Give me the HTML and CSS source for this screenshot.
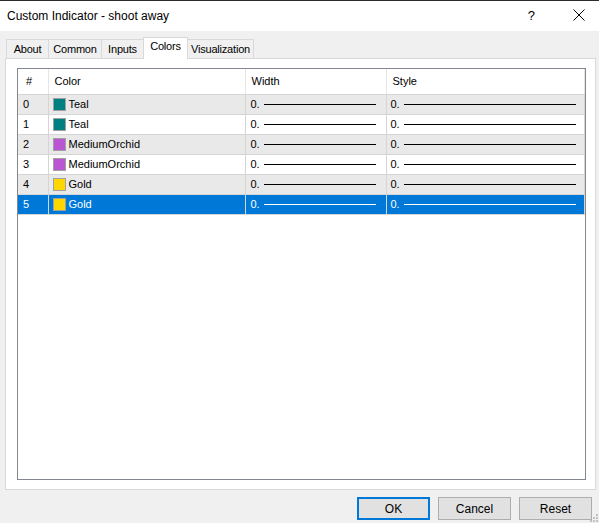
FILE: index.html
```html
<!DOCTYPE html>
<html>
  <head>
    <meta name="viewport" content="width=device-width, initial-scale=1" />
    <title>Custom Indicator - shoot away</title>
    <link rel="stylesheet" href="styles.css">
  </head>

  <body>
    <div id="titlebar">
      <span class="title">Custom Indicator - shoot away</span>
      <span class="help">?</span>
      <svg class="close" width="12" height="12" viewBox="0 0 12 12">
        <path d="M0.5 0.5 L11.5 11.5 M11.5 0.5 L0.5 11.5" stroke="#000" stroke-width="1" fill="none" />
      </svg>
    </div>

    <div id="tabs">
      <div class="tab tab-about">About</div>
      <div class="tab tab-common">Common</div>
      <div class="tab tab-inputs">Inputs</div>
      <div class="tab tab-colors active">Colors</div>
      <div class="tab tab-vis">Visualization</div>
    </div>

    <div id="panel">
      <div id="listbox">
        <table>
          <tr class="head">
            <th class="c-num">#</th>
            <th class="c-color">Color</th>
            <th class="c-width">Width</th>
            <th class="c-style">Style</th>
          </tr>
          <tr class="odd">
            <td>0</td>
            <td><span class="swatch teal"></span>Teal</td>
            <td><div class="val">0.<span class="line"></span></div></td>
            <td><div class="val">0.<span class="line"></span></div></td>
          </tr>
          <tr>
            <td>1</td>
            <td><span class="swatch teal"></span>Teal</td>
            <td><div class="val">0.<span class="line"></span></div></td>
            <td><div class="val">0.<span class="line"></span></div></td>
          </tr>
          <tr class="odd">
            <td>2</td>
            <td><span class="swatch orchid"></span>MediumOrchid</td>
            <td><div class="val">0.<span class="line"></span></div></td>
            <td><div class="val">0.<span class="line"></span></div></td>
          </tr>
          <tr>
            <td>3</td>
            <td><span class="swatch orchid"></span>MediumOrchid</td>
            <td><div class="val">0.<span class="line"></span></div></td>
            <td><div class="val">0.<span class="line"></span></div></td>
          </tr>
          <tr class="odd">
            <td>4</td>
            <td><span class="swatch gold"></span>Gold</td>
            <td><div class="val">0.<span class="line"></span></div></td>
            <td><div class="val">0.<span class="line"></span></div></td>
          </tr>
          <tr class="selected">
            <td>5</td>
            <td><span class="swatch gold"></span>Gold</td>
            <td><div class="val">0.<span class="line"></span></div></td>
            <td><div class="val">0.<span class="line"></span></div></td>
          </tr>
        </table>
      </div>
    </div>

    <div id="buttons">
      <button class="default">OK</button>
      <button>Cancel</button>
      <button>Reset</button>
    </div>

    <!-- size grip in the corner -->
    <svg class="grip" width="9" height="9" viewBox="0 0 9 9">
      <rect x="6" y="0" width="2" height="2" fill="#c2c2c2" />
      <rect x="3" y="3" width="2" height="2" fill="#c2c2c2" />
      <rect x="6" y="3" width="2" height="2" fill="#c2c2c2" />
      <rect x="0" y="6" width="2" height="2" fill="#c2c2c2" />
      <rect x="3" y="6" width="2" height="2" fill="#c2c2c2" />
      <rect x="6" y="6" width="2" height="2" fill="#c2c2c2" />
    </svg>
  </body>
</html>
```

FILE: styles.css
```css
* {
  box-sizing: border-box;
}

body {
  margin: 0;
  width: 599px;
  height: 523px;
  background-color: #f0f0f0;
  font-family: "Liberation Sans", Arial, sans-serif;
  font-size: 11px;
  color: #000;
  position: relative;
  overflow: hidden;
}

#titlebar {
  height: 31px;
  background-color: #fff;
  border-top: 1px solid #2b2b2b;
  display: flex;
  align-items: center;
  padding-left: 7px;
}

#titlebar .title {
  font-size: 12px;
  flex: 1;
  margin-top: -1px;
}

#titlebar .help {
  font-size: 13px;
  margin-right: 38px;
  margin-top: -2px;
}

#titlebar .close {
  margin-right: 14px;
  margin-top: -2px;
}

#tabs {
  display: flex;
  align-items: flex-end;
  padding-left: 6px;
  height: 27px;
}

.tab {
  height: 19px;
  line-height: 18px;
  text-align: center;
  background-color: #f0f0f0;
  border: 1px solid #d9d9d9;
  border-bottom: none;
  margin-right: -1px;
  letter-spacing: -0.2px;
}

.tab-about {
  width: 43px;
}

.tab-common {
  width: 54px;
}

.tab-inputs {
  width: 43px;
}

.tab-colors {
  width: 45px;
}

.tab-vis {
  width: 67px;
}

.tab.active {
  height: 22px;
  background-color: #fff;
  line-height: 17px;
  margin-bottom: -1px;
  position: relative;
  z-index: 1;
}

#panel {
  margin-left: 5px;
  width: 591px;
  height: 432px;
  background-color: #fff;
  border: 1px solid #d9d9d9;
  padding: 9px 9px 10px 11px;
}

#listbox {
  height: 412px;
  border: 1px solid #828790;
  background-color: #fff;
  padding-right: 1px;
}

table {
  border-collapse: collapse;
  table-layout: fixed;
  width: 566px;
}

th,
td {
  padding: 0;
  text-align: left;
  font-weight: normal;
  white-space: nowrap;
  border-right: 1px solid #d5d5d5;
  border-bottom: 1px solid #d5d5d5;
}

.head th {
  height: 25px;
  border-right-color: #e5e5e5;
  padding-bottom: 1px;
}

th.c-num {
  width: 30px;
  padding-left: 8px;
}

th.c-color {
  width: 197px;
  padding-left: 6px;
}

th.c-width {
  width: 141px;
  padding-left: 6px;
}

th.c-style {
  width: 198px;
  padding-left: 6px;
}

td {
  height: 20px;
}

td:first-child {
  padding-left: 5px;
}

td:nth-child(2) {
  padding-left: 4px;
}

td:nth-child(3) {
  padding-left: 5px;
}

td:nth-child(4) {
  padding-left: 4px;
}

tr.odd td {
  background-color: #e9e9e9;
}

tr.selected td {
  background-color: #0078d7;
  color: #fff;
}

.swatch {
  display: inline-block;
  width: 13px;
  height: 13px;
  border: 1px solid #a0a0a0;
  vertical-align: -3px;
  margin-right: 3px;
}

.teal {
  background-color: #008080;
}

.orchid {
  background-color: #ba55d3;
}

.gold {
  background-color: #ffd700;
}

.val {
  display: flex;
  align-items: center;
}

.line {
  display: block;
  height: 1px;
  background-color: #000;
  margin-left: 4px;
  margin-top: 1px;
}

td:nth-child(3) .line {
  width: 112px;
}

td:nth-child(4) .line {
  width: 172px;
}

tr.selected .line {
  background-color: #fff;
}

#buttons {
  display: flex;
  justify-content: flex-end;
  gap: 8px;
  padding-right: 7px;
  margin-top: 7px;
}

button {
  width: 73px;
  height: 23px;
  font-family: "Liberation Sans", Arial, sans-serif;
  font-size: 12px;
  background-color: #e1e1e1;
  border: 1px solid #adadad;
  color: #000;
  padding: 0;
}

button.default {
  border: 2px solid #0078d7;
}

.grip {
  position: absolute;
  right: 0;
  bottom: 0;
}
```
